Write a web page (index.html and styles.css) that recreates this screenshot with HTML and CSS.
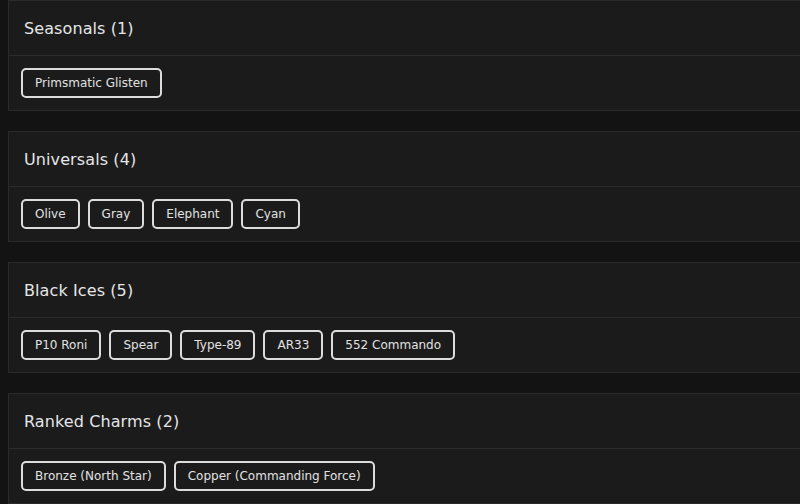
FILE: index.html
```html
<!DOCTYPE html>
<html>
<head>
<meta charset="utf-8">
<link rel="stylesheet" href="styles.css">
</head>
<body>
<div class="page">
  <section class="card">
    <div class="card-head"><h2 class="card-title">Seasonals (1)</h2></div>
    <div class="card-body">
      <span class="tag">Primsmatic Glisten</span>
    </div>
  </section>
  <section class="card">
    <div class="card-head"><h2 class="card-title">Universals (4)</h2></div>
    <div class="card-body">
      <span class="tag">Olive</span>
      <span class="tag">Gray</span>
      <span class="tag">Elephant</span>
      <span class="tag">Cyan</span>
    </div>
  </section>
  <section class="card">
    <div class="card-head"><h2 class="card-title">Black Ices (5)</h2></div>
    <div class="card-body">
      <span class="tag">P10 Roni</span>
      <span class="tag">Spear</span>
      <span class="tag">Type-89</span>
      <span class="tag">AR33</span>
      <span class="tag">552 Commando</span>
    </div>
  </section>
  <section class="card">
    <div class="card-head"><h2 class="card-title">Ranked Charms (2)</h2></div>
    <div class="card-body">
      <span class="tag">Bronze (North Star)</span>
      <span class="tag">Copper (Commanding Force)</span>
    </div>
  </section>
</div>
</body>
</html>
```

FILE: styles.css
```css
html, body {
  margin: 0;
  padding: 0;
  background: #131313;
  overflow: hidden;
}
body {
  font-family: "DejaVu Sans", "Open Sans", sans-serif;
  color: #e4e4e4;
}
.page {
  display: flex;
  flex-direction: column;
  gap: 20px;
  padding-left: 8px;
  width: 820px;
}
.card {
  background: #1b1b1b;
  border: 1px solid #2a2a2a;
}
.card-head {
  height: 54px;
  display: flex;
  align-items: center;
  padding: 0 15px;
  border-bottom: 1px solid #2c2c2c;
}
.card-title {
  margin: 0;
  font-size: 16px;
  font-weight: 500;
  color: #e6e6e6;
  letter-spacing: 0.1px;
}
.card-body {
  display: flex;
  gap: 8px;
  padding: 12px;
}
.tag {
  box-sizing: border-box;
  height: 30px;
  display: inline-flex;
  align-items: center;
  padding: 0 12px;
  border: 2px solid #dcdcdc;
  border-radius: 5px;
  font-size: 12px;
  color: #e2e2e2;
}
```
